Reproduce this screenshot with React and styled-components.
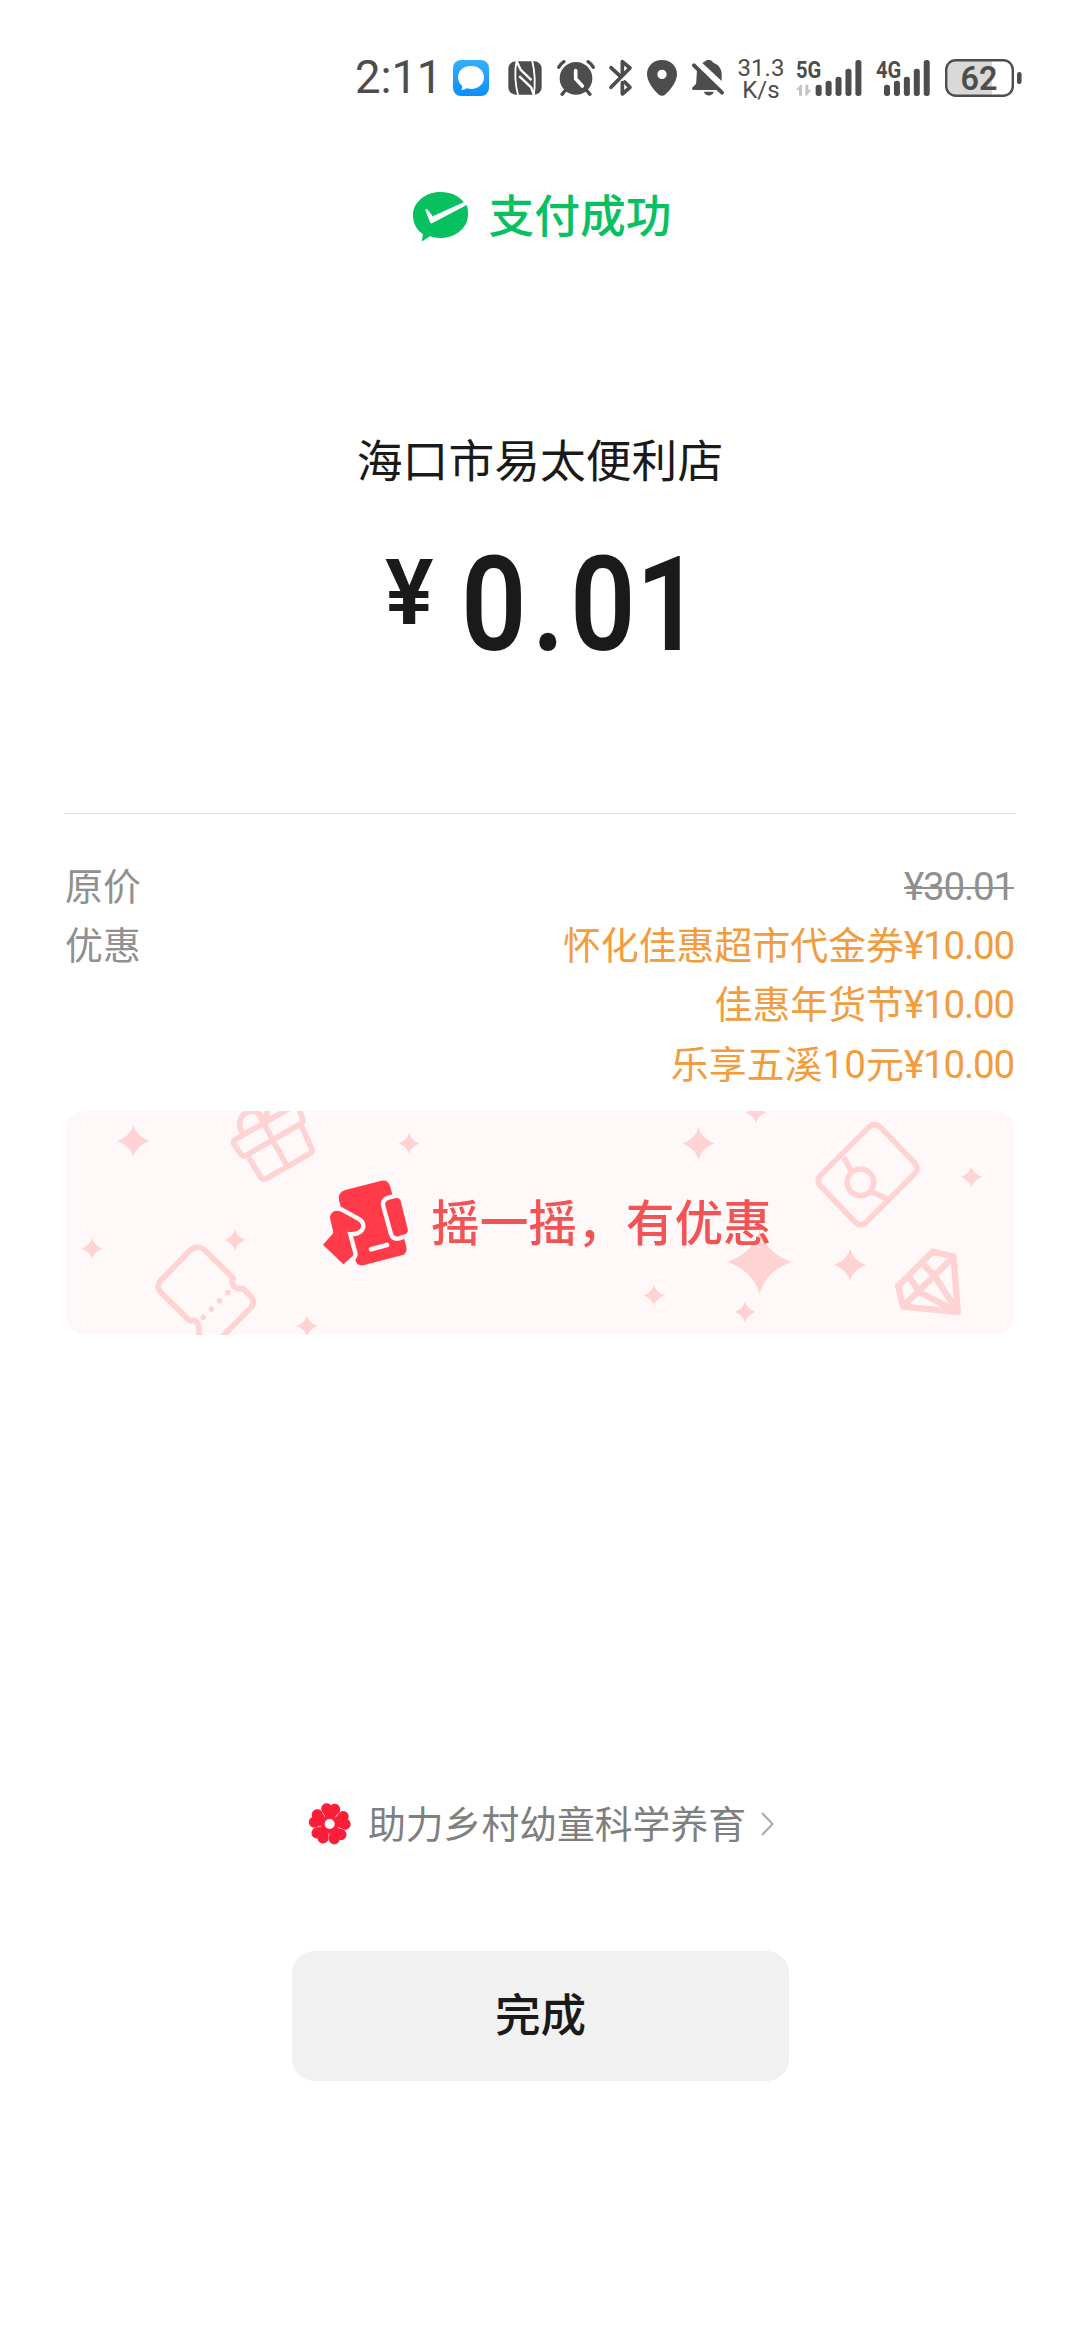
import React from 'react';
import styled, { createGlobalStyle } from 'styled-components';

const Global = createGlobalStyle`
  body { margin: 0; background: #fff; }
  * { box-sizing: border-box; }
`;

const cjk = `'Noto Sans CJK SC', sans-serif`;
const num = `Roboto, 'Noto Sans CJK SC', sans-serif`;

const Screen = styled.main`
  width: 1080px;
  height: 2340px;
  overflow: hidden;
  display: flex;
  flex-direction: column;
  align-items: center;
  background: #fff;
  color: #1a1a1a;
  font-family: ${cjk};
`;

const StatusBar = styled.header`
  width: 100%;
  height: 156px;
  padding: 0 50px 0 354px;
  display: flex;
  align-items: center;
  flex: none;
  color: #4d4d4d;
  font-family: ${num};
`;

const Clock = styled.div`
  width: 82px;
  padding-left: 1px;
  font-size: 45.5px;
  line-height: 50px;
  letter-spacing: -0.1px;
  white-space: nowrap;
`;

const Glyph = styled.svg`
  display: block;
  flex: none;
  width: ${(p) => p.$w}px;
  height: ${(p) => p.$h}px;
  margin-left: ${(p) => p.$ml || 0}px;
  overflow: visible;
`;

const Speed = styled.div`
  display: flex;
  flex-direction: column;
  align-items: center;
  width: 46px;
  margin-left: 14px;
  padding-top: 1px;
`;

const SpeedLine = styled.span`
  font-size: 24px;
  line-height: 22px;
  white-space: nowrap;
`;

const Success = styled.div`
  display: flex;
  align-items: center;
  height: 60px;
  margin-top: 30px;
  padding-left: 5px;
  color: #07c160;
`;

const SuccessText = styled.div`
  margin-left: 20px;
  padding-bottom: 6px;
  font-size: 45.8px;
  font-weight: 500;
  line-height: 54px;
`;

const Merchant = styled.div`
  margin-top: 182px;
  height: 60px;
  font-size: 45.8px;
  line-height: 60px;
`;

const Amount = styled.div`
  display: flex;
  align-items: flex-start;
  height: 140px;
  margin: 47px 12px 0 0;
  font-family: ${num};
  font-weight: 600;
`;

const Currency = styled.span`
  width: 76px;
  margin-top: 12px;
  font-size: 91px;
  line-height: 92px;
`;

const Figure = styled.span`
  width: 222px;
  font-size: 132px;
  line-height: 140px;
  white-space: nowrap;
  transform: scaleX(0.87);
  transform-origin: left center;
`;

const Whole = styled.span`
  letter-spacing: 6.2px;
`;

const Details = styled.section`
  width: 952px;
  margin-top: 138px;
  padding-top: 40px;
  border-top: 1px solid #e2e2e2;
  display: flex;
  flex-direction: column;
`;

const DetailRow = styled.div`
  display: flex;
  justify-content: space-between;
  padding: 0 2px 0 1px;
  color: ${(p) => p.$color || '#909090'};
  font-size: 37.9px;
  line-height: 59.2px;
`;

const Label = styled.span`
  color: #909090;
`;

const Values = styled.div`
  display: flex;
  flex-direction: column;
  align-items: flex-end;
`;

const Value = styled.div`
  display: flex;
  align-items: baseline;
  height: 59.2px;
  padding-top: ${(p) => p.$drop || 0}px;
  white-space: pre;
`;

const Digits = styled.span`
  font-family: ${num};
  font-size: 38.5px;
  letter-spacing: ${(p) => (p.$wide ? 0.2 : -1.15)}px;
  text-decoration: ${(p) => (p.$struck ? 'line-through' : 'none')};
  text-decoration-thickness: 2px;
`;

const Banner = styled.section`
  position: relative;
  width: 950px;
  height: 224px;
  margin-top: 20px;
  border-radius: 20px;
  overflow: hidden;
  background: #fff8f8;
  display: flex;
  align-items: center;
  padding-left: 258px;
`;

const BannerArt = styled.svg`
  position: absolute;
  inset: 0;
  width: 950px;
  height: 224px;
`;

const BannerContent = styled.div`
  position: relative;
  display: flex;
  align-items: center;
`;

const BannerText = styled.div`
  margin-left: 22px;
  padding-bottom: 6px;
  font-size: 48.7px;
  font-weight: 500;
  line-height: 60px;
  color: #f25455;
  white-space: nowrap;
`;

const CharityLink = styled.div`
  display: flex;
  align-items: center;
  height: 60px;
  margin-top: 459px;
  padding-left: 3px;
  color: #7f7f7f;
`;

const CharityText = styled.span`
  margin: 0 15px 0 18px;
  padding-bottom: 4px;
  font-size: 37.8px;
  line-height: 56px;
`;

const DoneButton = styled.button`
  width: 497px;
  height: 130px;
  margin-top: 97px;
  padding: 0 0 7px 1px;
  border: 0;
  border-radius: 22px;
  background: #f1f1f1;
  color: #1a1a1a;
  font: 500 45.6px/60px ${cjk};
`;

const starPath = (x, y, r) => {
  const k = r * 0.27;
  return `M${x} ${y - r}Q${x + k * 0.7} ${y - k * 1.1} ${x + r} ${y}Q${x + k * 0.7} ${y + k * 1.1} ${x} ${y + r}Q${x - k * 0.7} ${y + k * 1.1} ${x - r} ${y}Q${x - k * 0.7} ${y - k * 1.1} ${x} ${y - r}Z`;
};

const stars = [
  [133.3, 1141, 16], [409, 1143.5, 10.5], [235, 1240, 10.5], [92, 1248.5, 10.5], [307, 1326, 10.5],
  [698.5, 1143.5, 16], [756, 1112.5, 10.5], [971.5, 1177, 10.5], [759.5, 1262, 32],
  [850, 1265, 16], [654, 1295.5, 10.5], [745, 1312, 10.5],
];

function MessageIcon() {
  return (
    <Glyph $w={36} $h={36} $ml={17} viewBox="0 0 108 108">
      <defs>
        <linearGradient id="msg" x1="0" y1="0" x2="0" y2="1">
          <stop offset="0" stopColor="#37aefb" />
          <stop offset="1" stopColor="#0a90fb" />
        </linearGradient>
      </defs>
      <rect width="108" height="108" rx="24" fill="url(#msg)" />
      <path fill="#fff" d="M54 18c23 0 39 14 39 34S77 87 54 87c-6 0-11-1-14-2-4 3-9 5-15 5 2-3 3-7 3-12C20 72 15 63 15 52c0-20 16-34 39-34Z" />
    </Glyph>
  );
}

function NfcIcon() {
  return (
    <Glyph $w={34} $h={34} $ml={19} viewBox="505 62 101 103">
      <rect x="505" y="63" width="101" height="101" rx="22" fill="#4d4d4d" />
      <g fill="none" stroke="#fff" strokeLinejoin="round">
        <path d="M530 60Q520 112 535 168M577 60Q590 112 582 168" strokeWidth="5.5" />
        <path d="M530 62l12 26 33 32" strokeWidth="7" />
        <path d="M538 108l36 34 8 22" strokeWidth="7" />
      </g>
    </Glyph>
  );
}

function AlarmIcon() {
  return (
    <Glyph $w={38} $h={36} $ml={15} viewBox="650 60 114 108">
      <circle cx="707" cy="115" r="49" fill="#4d4d4d" />
      <path d="M655 82q5-10 16-17M759 82q-5-10-16-17M676 150l-11 13M738 150l11 13" stroke="#4d4d4d" strokeWidth="10" strokeLinecap="round" fill="none" />
      <path d="M706 92v24l20 22" stroke="#fff" strokeWidth="11" strokeLinecap="round" strokeLinejoin="round" fill="none" />
    </Glyph>
  );
}

function BluetoothIcon() {
  return (
    <Glyph $w={23} $h={36} $ml={14} viewBox="808 60 69 108">
      <path d="M814 83l26 24M848 100V65l23 19-57 58M848 128v34l23-20-16-16" stroke="#4d4d4d" strokeWidth="11" strokeLinejoin="round" strokeLinecap="round" fill="none" />
    </Glyph>
  );
}

function LocationIcon() {
  return (
    <Glyph $w={30} $h={36} $ml={15} viewBox="920 60 90 108">
      <path fillRule="evenodd" fill="#4d4d4d" d="M965 60c26 0 45 18 45 43 0 22-19 46-34 60q-11 9-22 0c-15-14-34-38-34-60 0-25 19-43 45-43Zm0 29a14 14 0 1 0 0 28 14 14 0 0 0 0-28Z" />
    </Glyph>
  );
}

function BellOffIcon() {
  return (
    <Glyph $w={32} $h={36} $ml={15} viewBox="35 60 96 108">
      <path fill="#4d4d4d" d="M66 69c8-3 9-9 20-9 8 0 10 5 14 9 16 6 24 18 24 34v20ZM50 89l62 61H40c-7 0-6-7 0-11 6-5 8-9 8-17ZM71 155h29c-2 15-26 15-29 0Z" />
      <path d="M41 76l84 82" stroke="#4d4d4d" strokeWidth="12" strokeLinecap="round" />
    </Glyph>
  );
}

function Signal({ label, arrows, offset, ml, w }) {
  const tops = [134, 122, 110, 86, 60];
  return (
    <Glyph $w={w} $h={36} $ml={ml} viewBox={`0 60 ${w * 3} 108`}>
      <text x="0" y="113" textLength="76" lengthAdjust="spacingAndGlyphs" fontFamily="Roboto, sans-serif" fontWeight="700" fontSize="73" fill="#4d4d4d">{label}</text>
      {arrows && <path fill="#c4c4c4" d="M0 150l14-16h4v33h-9v-17ZM46 150l-14 17h-4v-33h9v16Z" />}
      {tops.map((t, i) => (
        <rect key={t} x={offset + i * 29.8} y={t} width="18" height={168 - t} rx="8" fill="#4d4d4d" />
      ))}
    </Glyph>
  );
}

function Battery() {
  return (
    <Glyph $w={77} $h={38} $ml={15} viewBox="0 0 77 38">
      <path fill="#d9d9d9" d="M12 2h35v34H12Q2 36 2 26V12Q2 2 12 2Z" />
      <rect x="1.2" y="1.2" width="66.6" height="35.6" rx="9.5" fill="none" stroke="#4d4d4d" strokeWidth="2.4" />
      <rect x="72" y="13" width="4.6" height="12" rx="2.3" fill="#4d4d4d" />
      <text x="15.5" y="30.8" textLength="37" lengthAdjust="spacingAndGlyphs" fontFamily="Roboto, sans-serif" fontWeight="600" fontSize="33" fill="#4d4d4d">62</text>
    </Glyph>
  );
}

function WePayIcon() {
  return (
    <Glyph $w={55} $h={49} viewBox="69 69 165 147">
      <path fill="#07c160" d="M151 69c31 0 57 12 70 31l-93 42-14-19c-5-5-9-3-7 3l13 34c2 4 5 4 9 1l101-53c3 8 4 16 4 30 0 38-37 69-83 69-12 0-22-2-31-5-7 4-15 9-22 14-3 1-3-1-2-4l3-16c-19-13-30-33-30-58 0-38 37-69 82-69Z" />
    </Glyph>
  );
}

function ShakeIcon() {
  return (
    <Glyph $w={86} $h={86} viewBox="817 236 258 258">
      <path fill="#ff3b49" d="M884 266l108-28q20-4 26 16l49 182q4 20-14 26l-112 29q-20 5-26-12l-50-182q-4-24 19-31Z" />
      <g fill="#ff3b49" stroke="#fff8f8" strokeWidth="26" strokeLinejoin="round" paintOrder="stroke">
        <path d="M1015 295l22-5q10-1 13 9l21 84q3 11-7 15l-20 7q-12 3-17-9l-23-84q-3-12 11-17Z" />
        <path d="M838 350c0-19 18-27 34-19l50 28c11 7 12 18 5 25-8 8-22 9-37 7l18 66q1 4-3 8l-27 24-61-59 28-31q3-4 2-10Z" />
      </g>
      <path d="M961 444l48-13" stroke="#fff8f8" strokeWidth="14" strokeLinecap="round" />
    </Glyph>
  );
}

function Flower() {
  return (
    <Glyph $w={41} $h={42} viewBox="-62 -63 123 126">
      <g fill="#fa1e39">
        {[4, 76, 148, 220, 292].map((a) => (
          <g key={a} transform={`rotate(${a})`}>
            <circle cx="-12" cy="-45" r="16.5" />
            <circle cx="12" cy="-45" r="16.5" />
            <path d="M-28 -41L0 0L28 -41L0 -52Z" />
          </g>
        ))}
        <circle r="27" />
      </g>
      <circle r="15" fill="#fff" />
    </Glyph>
  );
}

function Art() {
  return (
    <BannerArt viewBox="65 1111 950 224">
      <g fill="#ffd3d4">
        {stars.map(([x, y, r]) => <path key={x} d={starPath(x, y, r)} />)}
      </g>
      <g transform="translate(50.5 1100) scale(.33333)" fill="none" stroke="#ffd3d4" strokeWidth="17" strokeLinejoin="round" strokeLinecap="round">
        <path d="M551 134q-6-10 4-16L740 12l16 44q4 10-6 16L587 166q-10 6-15-3Z" />
        <path d="M594 172l37 60q6 10 16 4l132-76q10-6 4-16L755 82M613 20l93 172M574 96c-14-26-4-56 24-62 22-4 36 10 42 38q14-22 6-60" />
        <path d="M548 534L462 450q-20-16-40-2L330 542q-14 16 0 34l87 86q26-6 29 24-2 20 4 24M548 534c-10 20 6 36 30 32l22 22q16 18 0 36L515 710" />
        <path d="M532 578l-74 74" strokeDasharray="0 34.8" />
      </g>
      <g transform="translate(620.5 1100) scale(.33333)" fill="none" stroke="#ffd3d4" strokeWidth="16.5" strokeLinejoin="round">
        <path d="M744 82L600 226q-14 16 0 32l104 108q16 16 34 0L882 222q16-16 0-34L780 82q-18-16-36 0Z" />
        <circle cx="720" cy="247" r="40" />
        <path d="M670 172l22 42M755 276l45 20" />
        <path strokeWidth="19" d="M936 455l63 14 13 167-164-16-15-62ZM1000 470L850 616M868 532l28 44 116 60M910 495l32 32 70 108" />
      </g>
    </BannerArt>
  );
}

export default function App() {
  return (
    <Screen>
      <Global />
      <StatusBar>
        <Clock>2:11</Clock>
        <MessageIcon />
        <NfcIcon />
        <AlarmIcon />
        <BluetoothIcon />
        <LocationIcon />
        <BellOffIcon />
        <Speed>
          <SpeedLine>31.3</SpeedLine>
          <SpeedLine>K/s</SpeedLine>
        </Speed>
        <Signal label="5G" arrows offset={59} ml={12} w={66} />
        <Signal label="4G" offset={24} ml={14} w={54} />
        <Battery />
      </StatusBar>
      <Success>
        <WePayIcon />
        <SuccessText>支付成功</SuccessText>
      </Success>
      <Merchant>海口市易太便利店</Merchant>
      <Amount>
        <Currency>¥</Currency>
        <Figure><Whole>0.</Whole>01</Figure>
      </Amount>
      <Details>
        <DetailRow>
          <Label>原价</Label>
          <Value $drop={3}><Digits $struck>¥30.01</Digits></Value>
        </DetailRow>
        <DetailRow $color="#f29c3d">
          <Label>优惠</Label>
          <Values>
            <Value>怀化佳惠超市代金券<Digits>¥10.00</Digits></Value>
            <Value>佳惠年货节<Digits>¥10.00</Digits></Value>
            <Value>乐享五溪<Digits $wide>10</Digits>元<Digits>¥10.00</Digits></Value>
          </Values>
        </DetailRow>
      </Details>
      <Banner>
        <Art />
        <BannerContent>
          <ShakeIcon />
          <BannerText>摇一摇，有优惠</BannerText>
        </BannerContent>
      </Banner>
      <CharityLink>
        <Flower />
        <CharityText>助力乡村幼童科学养育</CharityText>
        <Glyph $w={13} $h={24} viewBox="0 0 13 24">
          <path d="M1 1l10.5 11L1 23" fill="none" stroke="#b0b0b0" strokeWidth="2.4" />
        </Glyph>
      </CharityLink>
      <DoneButton>完成</DoneButton>
    </Screen>
  );
}
